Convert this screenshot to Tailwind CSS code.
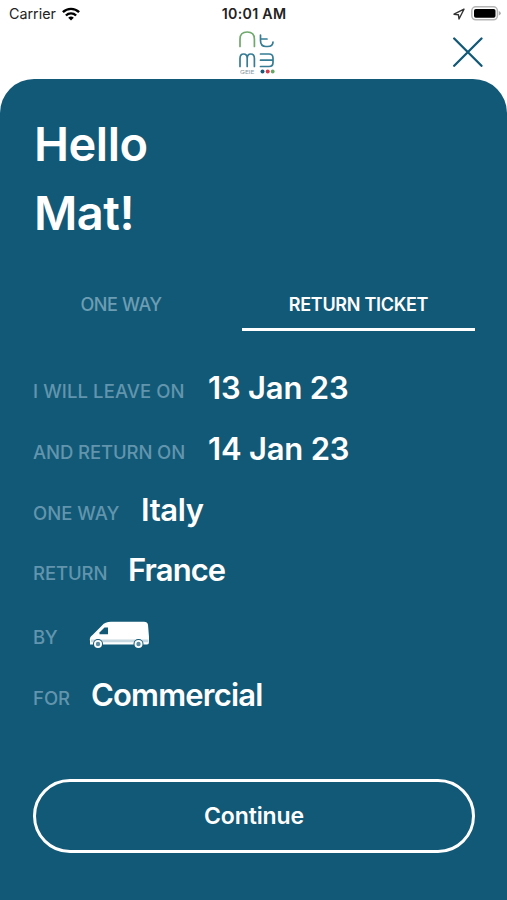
<!DOCTYPE html>
<html lang="en">
  <head>
    <meta charset="UTF-8" />
    <meta name="viewport" content="width=device-width, initial-scale=1.0" />
    <title>Ticket Summary</title>
    <!-- Include Tailwind CSS -->
    <script src="https://cdn.jsdelivr.net/npm/@tailwindcss/browser@4"></script>
  </head>
  <body class="bg-white font-['Inter',sans-serif]">
    <div class="flex h-[900px] w-[507px] flex-col overflow-hidden">
      <!-- Status Bar -->
      <div class="grid h-[27px] shrink-0 grid-cols-3 items-center pr-[6px] pl-[9px] text-[#222]">
        <div class="flex items-center gap-[6px] text-[14.3px]">
          <span>Carrier</span>
          <svg class="h-[14px] w-[18px]" viewBox="0 0 18 14" fill="none" stroke="#000" stroke-width="2.4">
            <path d="M.9 5.2a11.6 11.6 0 0 1 16.2 0" />
            <path d="M3.9 8.5a7.3 7.3 0 0 1 10.2 0" />
            <path d="M9 13.6 6.2 10.8a4 4 0 0 1 5.6 0z" fill="#000" stroke="none" />
          </svg>
        </div>
        <div class="-ml-[2px] pt-px text-center text-[14.2px] font-semibold tracking-[0.3px] whitespace-nowrap">10:01 AM</div>
        <div class="flex items-center justify-end gap-[6px]">
          <svg class="h-[12px] w-[12px]" viewBox="0 0 12 12" fill="none" stroke="#333" stroke-width="1.4" stroke-linejoin="round">
            <path d="M11 1.2 1 6.200l4.400.500.600 4.300z" />
          </svg>
          <svg class="h-[15px] w-[30px]" viewBox="0 0 30 15">
            <rect x=".8" y=".8" width="25.6" height="13" rx="4" fill="#fff" stroke="#b5b5b5" stroke-width="1.5" />
            <rect x="3" y="3" width="21.5" height="8.8" rx="1.8" fill="#000" />
            <path d="M27.8 5v4.6q2-.8 2-2.3T27.8 5z" fill="#aaa" />
          </svg>
        </div>
      </div>

      <!-- Header -->
      <div class="grid h-[52px] shrink-0 grid-cols-3 items-start">
        <div></div>
        <svg class="mt-[3px] ml-[6px] h-[46px] w-[38px] justify-self-center" viewBox="0 0 38 46" fill="none" stroke-width="1.7" stroke-linecap="round">
          <path d="M2 16.500V9q0-7 7.200-7t7.200 7v7.500" stroke="#6fa96b" />
          <path d="M22.500 5v5.500q0 6 5.500 6h1.500q5.500 0 5.500-4.500M22.500 9H29" stroke="#367c94" />
          <path d="M2 36.500v-8q0-4.500 3.600-4.500t3.600 4.500v8M9.200 28.500q0-4.500 3.600-4.500t3.600 4.500v8" stroke="#367c94" />
          <path d="M22.500 24h8.500q4 0 4 4v4.500q0 4-4 4h-8.500M22.500 30.200H35" stroke="#367c94" />
          <text x="2" y="43.500" font-size="5.400" textLength="14.500" lengthAdjust="spacingAndGlyphs" fill="#849aa3" stroke="none">GEIE</text>
          <circle cx="24.500" cy="41.500" r="2" fill="#175b78" />
          <circle cx="29.700" cy="41.500" r="2" fill="#d33a4b" />
          <circle cx="34.700" cy="41.500" r="1.900" fill="#66a767" />
        </svg>
        <button class="mt-[10px] mr-[24px] justify-self-end" aria-label="Close">
          <svg class="h-[30px] w-[30px]" viewBox="0 0 30 30" stroke="#125977" stroke-width="2.300" stroke-linecap="round">
            <path d="M1.200 1.500 28.500 28.800M28.500 1.500 1.200 28.800" />
          </svg>
        </button>
      </div>

      <!-- Ticket Card -->
      <div class="flex flex-1 flex-col rounded-t-[34px] bg-[#125977] px-[33px] pt-[30px] text-white">
        <h1 class="h-[138px] pl-px text-[47px] leading-[69px] font-semibold tracking-[-0.5px]">
          Hello<br />Mat!
        </h1>

        <!-- Tabs -->
        <div class="mt-[45px] flex w-[442px] gap-[33px] text-[18px] leading-[26px] font-medium">
          <div class="w-[176px] text-center tracking-[-0.4px] text-[#6d9db3]">ONE WAY</div>
          <div class="h-[39px] w-[233px] border-b-3 text-center font-semibold tracking-[-0.3px]">RETURN TICKET</div>
        </div>

        <!-- Trip Details -->
        <div class="mt-[26px] text-[31px] leading-[61px] font-semibold whitespace-nowrap">
          <div class="flex h-[61px] items-baseline">
            <span class="w-[175px] -translate-y-px text-[18.5px] font-medium tracking-[0.1px] text-[#6295ad]">I WILL LEAVE ON</span>
            <span class="tracking-[-0.2px]">13 Jan 23</span>
          </div>
          <div class="flex h-[61px] items-baseline">
            <span class="w-[175px] -translate-y-px text-[18.5px] font-medium tracking-[-0.1px] text-[#6295ad]">AND RETURN ON</span>
            <span class="tracking-[-0.2px]">14 Jan 23</span>
          </div>
          <div class="flex h-[60px] items-baseline">
            <span class="w-[108px] -translate-y-px text-[18.5px] font-medium text-[#6295ad]">ONE WAY</span>
            <span class="tracking-[-0.4px]">Italy</span>
          </div>
          <div class="flex h-[61px] items-baseline">
            <span class="w-[95px] -translate-y-px text-[18.5px] font-medium tracking-[-0.1px] text-[#6295ad]">RETURN</span>
            <span class="tracking-[-0.9px]">France</span>
          </div>
          <div class="flex h-[64px] items-center">
            <span class="mt-[10px] w-[56px] text-[18.5px] font-medium tracking-[-0.4px] text-[#6295ad]">BY</span>
            <svg class="mt-[5px] h-[28px] w-[61px]" viewBox="0 0 61 28">
              <path d="M1 23.500v-3.500q-1-3.500 2.500-6L13 4.500Q16 .8 22 .8h33q3.500 0 4 3l1 12.200v5q0 2.500-2 2.500z" fill="#fff" />
              <path d="M10.500 13.200v-1.700L15.500 6.500H19v6.700z" fill="#125977" />
              <path d="M2 18.500h57.500v2.800H2z" fill="#c7d8e0" />
              <circle cx="9" cy="23" r="5" fill="#125977" />
              <circle cx="9" cy="23" r="4" fill="#fff" />
              <circle cx="9" cy="23" r="2.200" fill="#5c8ca2" />
              <circle cx="49.500" cy="23" r="5" fill="#125977" />
              <circle cx="49.500" cy="23" r="4" fill="#fff" />
              <circle cx="49.500" cy="23" r="2.200" fill="#5c8ca2" />
            </svg>
          </div>
          <div class="flex h-[61px] items-baseline">
            <span class="w-[58px] -translate-y-px text-[18.5px] font-medium text-[#6295ad]">FOR</span>
            <span class="tracking-[-0.8px]">Commercial</span>
          </div>
        </div>

        <button class="mt-[54px] h-[74px] w-[442px] rounded-full border-3 border-white pt-px text-[23px] font-semibold tracking-[-0.1px]">
          Continue
        </button>
      </div>
    </div>
  </body>
</html>
